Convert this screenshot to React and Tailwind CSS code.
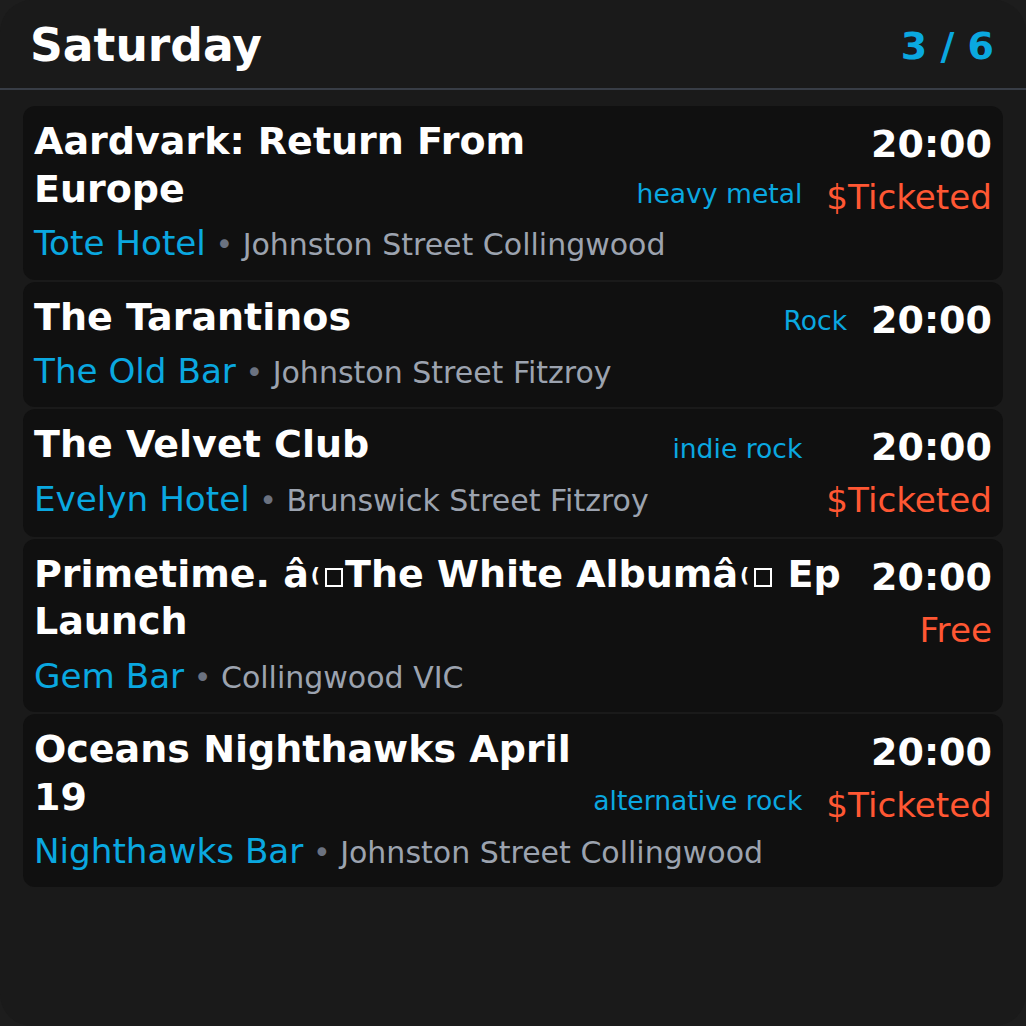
import React from 'react';

// Broken glyph pair shown in the feed where a curly quote was mis-decoded
const Garbled = () => (
  <>
    <span className="ml-[2px] inline-block align-[5px] text-[20px] font-bold leading-none">(</span>
    <span className="ml-[5px] mr-[2px] inline-block h-[19px] w-[18px] border-2 border-white align-baseline" />
  </>
);

const events = [
  {
    title: 'Aardvark: Return From Europe',
    genre: 'heavy metal',
    time: '20:00',
    price: '$Ticketed',
    venue: 'Tote Hotel',
    address: 'Johnston Street Collingwood',
  },
  {
    title: 'The Tarantinos',
    genre: 'Rock',
    time: '20:00',
    venue: 'The Old Bar',
    address: 'Johnston Street Fitzroy',
  },
  {
    title: 'The Velvet Club',
    genre: 'indie rock',
    time: '20:00',
    price: '$Ticketed',
    venue: 'Evelyn Hotel',
    address: 'Brunswick Street Fitzroy',
  },
  {
    title: (
      <>
        Primetime. â<Garbled />The White Albumâ<Garbled /> Ep Launch
      </>
    ),
    time: '20:00',
    price: 'Free',
    venue: 'Gem Bar',
    address: 'Collingwood VIC',
  },
  {
    title: 'Oceans Nighthawks April 19',
    genre: 'alternative rock',
    time: '20:00',
    price: '$Ticketed',
    venue: 'Nighthawks Bar',
    address: 'Johnston Street Collingwood',
  },
];

const EventCard = ({ event }) => (
  <div className="flex gap-6 rounded-xl bg-[#101010] px-[11px] pt-3 pb-[10px]">
    <div className="flex min-w-0 flex-1 flex-col">
      <div className="flex items-end gap-4">
        <h3 className="min-w-0 flex-1 text-[38px] font-bold leading-[1.25] text-white">
          {event.title}
        </h3>
        {event.genre && (
          <span className="shrink-0 text-[26.6px] leading-normal text-[#0aa8e0]">{event.genre}</span>
        )}
      </div>
      <p className="mt-[5px] whitespace-nowrap leading-normal">
        <span className="text-[34.2px] text-[#0aa8e0]">{event.venue}</span>
        <span className="text-[30px] text-[#6b7280]"> • </span>
        <span className="text-[30px] text-[#9ca3af]">{event.address}</span>
      </p>
    </div>
    <div className="flex shrink-0 flex-col items-end">
      <span className="text-[38px] font-bold leading-[52px] text-white">{event.time}</span>
      {event.price && (
        <span className="mt-0.5 text-[34.2px] leading-normal text-[#ff5733]">{event.price}</span>
      )}
    </div>
  </div>
);

export default function App() {
  return (
    <div className="min-h-[1026px] bg-[#1d1d1d] font-['DejaVu_Sans',sans-serif]">
      <div className="h-[1026px] rounded-[32px] bg-[#1a1a1a]">
        <header className="flex items-center justify-between border-b-2 border-[#383d46] pl-[30px] pr-8 pt-3 pb-2">
          <h1 className="text-[45.6px] font-bold leading-normal text-white">Saturday</h1>
          <span className="text-[38px] font-bold leading-normal text-[#0aa8e0]">3 / 6</span>
        </header>
        <div className="flex flex-col gap-0.5 px-[23px] pt-4">
          {events.map((event, i) => (
            <EventCard key={i} event={event} />
          ))}
        </div>
      </div>
    </div>
  );
}
